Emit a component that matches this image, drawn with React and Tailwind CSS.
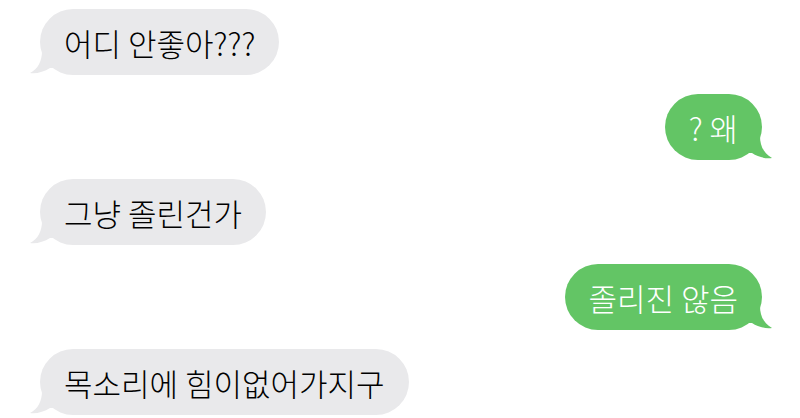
const messages = [
  { id: 1, from: 'them', text: '어디 안좋아???' },
  { id: 2, from: 'me', text: '? 왜' },
  { id: 3, from: 'them', text: '그냥 졸린건가' },
  { id: 4, from: 'me', text: '졸리진 않음' },
  { id: 5, from: 'them', text: '목소리에 힘이없어가지구' },
];

// little curled tail at the bottom corner of a bubble
function Tail({ side, color }) {
  const mine = side === 'me';
  return (
    <svg
      width="30"
      height="24"
      viewBox="0 0 30 24"
      className={mine ? 'absolute bottom-0 -right-[12px] -scale-x-100' : 'absolute bottom-0 -left-[12px]'}
    >
      <path d="M14 0 C14 10 10 18 2 22 C8 23 16 21 22 17 L30 17 L30 0 Z" fill={color} />
    </svg>
  );
}

function Bubble({ from, text }) {
  const mine = from === 'me';
  const color = mine ? '#63c565' : '#e9e9eb';
  return (
    <div className={mine ? 'flex justify-end' : 'flex justify-start'}>
      <div
        className={`relative h-[66px] px-[24px] flex items-center rounded-[33px] text-[31px] font-light leading-none ${
          mine ? 'bg-[#63c565] text-white' : 'bg-[#e9e9eb] text-black'
        }`}
      >
        <Tail side={from} color={color} />
        <span className="relative">{text}</span>
      </div>
    </div>
  );
}

export default function App() {
  return (
    <div
      className="w-[800px] h-[418px] overflow-hidden bg-white pt-[9px] pl-[40px] pr-[38px] flex flex-col gap-[19px]"
      style={{ fontFamily: '"Noto Sans CJK KR", "Noto Sans", sans-serif' }}
    >
      {messages.map((m) => (
        <Bubble key={m.id} from={m.from} text={m.text} />
      ))}
    </div>
  );
}
